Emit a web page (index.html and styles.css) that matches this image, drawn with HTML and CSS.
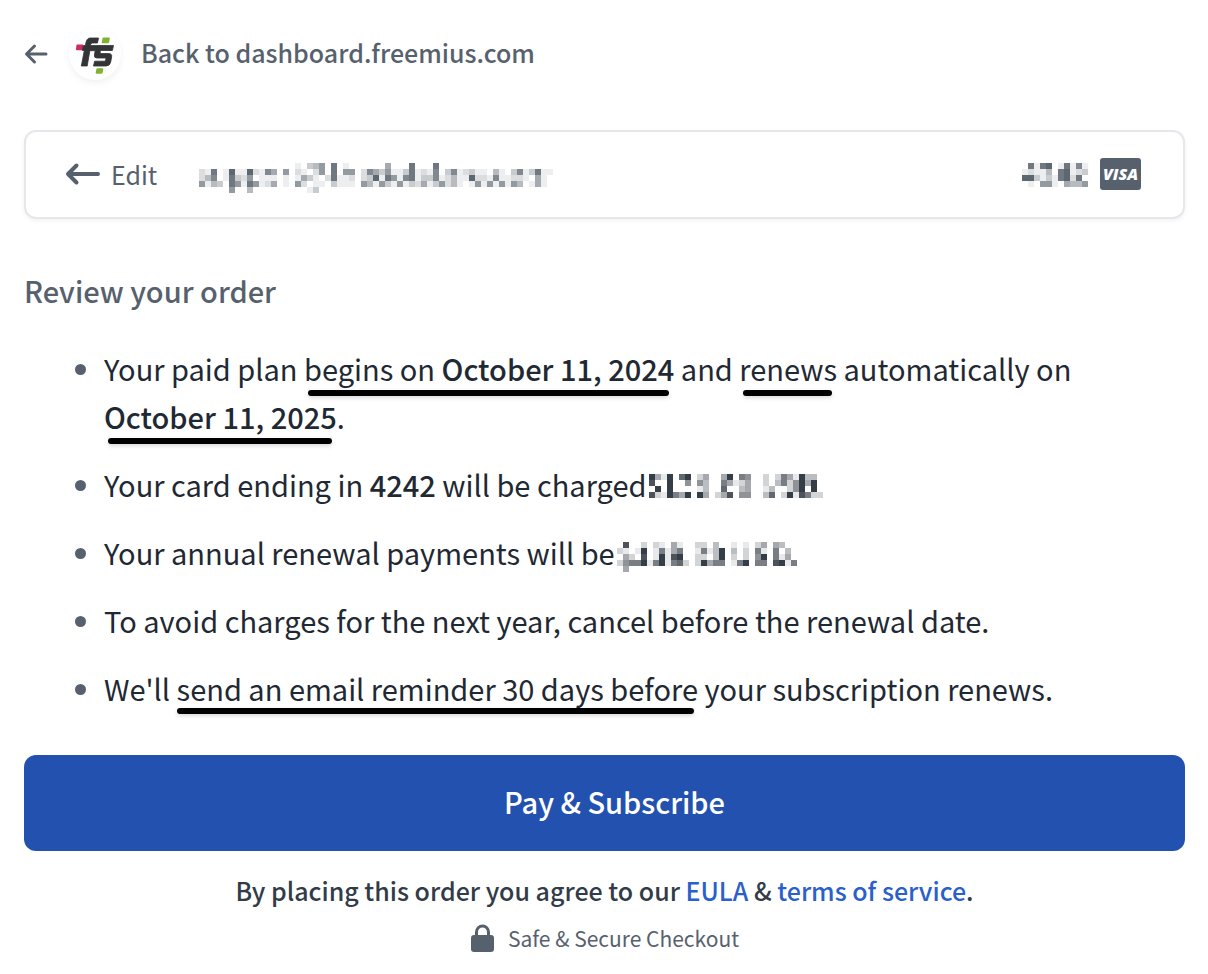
FILE: index.html
```
<!DOCTYPE html>
<html lang="en">
<head>
<meta charset="utf-8">
<meta name="viewport" content="width=device-width, initial-scale=1">
<title>Review your order</title>
<link rel="stylesheet" href="styles.css">
</head>
<body>
<main class="checkout">
  <a class="back" href="#dashboard">
    <svg class="back-arrow" viewBox="0 0 24 22" aria-hidden="true"><path d="M22 11H3M10.500 3 2.500 11l8 8"/></svg>
    <span class="logo">
      <svg viewBox="0 0 52 52" aria-hidden="true">
        <path fill="#cf2a62" d="M8.100 16.500h5.500q1 0 .8 1l-.7 3.700q-.3 1-1.300 1H7.800q-1 0-.8-1l.4-3.700q.2-1 .7-1z"/>
        <path fill="#7fb22f" d="M34.800 9.500h5.200q1 0 .8 1l-.7 3.800q-.3 1-1.300 1H33.500q-1 0-.8-1l.8-3.800q.2-1 1.300-1zM28.500 40.200h5q1 0 .8 1l-.7 3.500q-.3 1-1.300 1H27.500q-1 0-.8-1l.6-3.500q.2-1 1.200-1z"/>
        <path fill="#333436" stroke="#333436" stroke-width=".8" d="M21 10h8.500l-1 5h-5q-1.500 0-1.800 1.500l-.2 1h23l-1.100 5H32.500q-1 0-1.200 1l-.3 2h8.500q3.800 0 3.100 3.500l-.9 5Q40.900 38 37 38H24.500l1.100-4.800h9.700q1.200 0 1.400-1.200l.2-1q.2-1-1-1h-8q-3 0-2.500-3l.8-4.300h-5.300L18.200 38h-5.900l3-15.500h-2l1.100-5h2Q17.200 10 21 10z"/>
      </svg>
    </span>
    <span class="back-label">Back to dashboard.freemius.com</span>
  </a>

  <section class="card" aria-label="Payment details">
    <button class="edit" type="button">
      <svg class="edit-arrow" viewBox="0 0 36 24" aria-hidden="true"><path d="M33 12H3M11.500 3.500 3 12l8.500 8.500"/></svg>
      <span>Edit</span>
    </button>
    <svg class="mosaic email" data-tone="#4b5661" role="img" aria-label="Hidden email" data-rows="
00000000000000001034608010000005000800080000000000000000000
21801911921750602102608066027536113812170371231104103713811
24701832601110101531028112023918617813371241192217112210510
61430861861250106201103111064163161325136241016161616401510
00000600400000000013000000000000000000000000000000000000000"></svg>
    <svg class="mosaic last4" data-tone="#4b5661" role="img" aria-label="Hidden card digits" data-rows="
08189018171
12114089123
99313189280
01066105446"></svg>
    <span class="visa">VISA</span>
  </section>

  <h1 class="title">Review your order</h1>
  <ul class="terms">
    <li>Your paid plan <span class="mark">begins on <strong>October 11, 2024</strong></span> and <span class="mark">renews</span> automatically on <strong class="mark">October 11, 2025</strong>.</li>
    <li>Your card ending in <strong>4242</strong> will be charged <svg class="mosaic price" data-tone="#1f2832" role="img" aria-label="Hidden amount" data-rows="
94190790240049065002026419330
80090050530064124002036259490
09090000130070034001300259090
82196490940248055003702918622"></svg></li>
    <li>Your annual renewal payments will be <svg class="mosaic price" data-tone="#1f2832" role="img" aria-label="Hidden amount" data-rows="
080020210410022030010102404300
210190161460016139030206106030
042080191890022039020205906140
256691691672029466016906608916
040000000000000000000000000000"></svg></li>
    <li>To avoid charges for the next year, cancel before the renewal date.</li>
    <li>We'll <span class="mark wide">send an email reminder 30 days before</span> your subscription renews.</li>
  </ul>

  <button class="pay" type="button">Pay &amp; Subscribe</button>

  <p class="agree">By placing this order you agree to our <a href="#eula">EULA</a> &amp; <a href="#terms">terms of service</a>.</p>
  <p class="secure">
    <svg class="lock" viewBox="0 0 24 28" aria-hidden="true"><rect x="1" y="11" width="23" height="17" rx="3" fill="#57616e"/><path d="M6.500 12V8a6 6 0 0 1 12 0v4" fill="none" stroke="#57616e" stroke-width="3"/></svg>
    <span>Safe &amp; Secure Checkout</span>
  </p>
</main>
<script src="mosaic.js"></script>
</body>
</html>
```
FILE: mosaic.js
```
// Draws censored values as a grid of cells; each digit is a cell's darkness from 0 to 9.
document.querySelectorAll('.mosaic').forEach(function (svg) {
  var cell = 6;
  var rows = svg.dataset.rows.trim().split(/\s+/);
  var width = rows[0].length * cell;
  var height = rows.length * cell;
  svg.setAttribute('width', width);
  svg.setAttribute('height', height);
  svg.setAttribute('viewBox', '0 0 ' + width + ' ' + height);
  rows.forEach(function (row, y) {
    row.split('').forEach(function (level, x) {
      if (level === '0') return;
      var rect = document.createElementNS('http://www.w3.org/2000/svg', 'rect');
      rect.setAttribute('x', x * cell);
      rect.setAttribute('y', y * cell);
      rect.setAttribute('width', cell);
      rect.setAttribute('height', cell);
      rect.setAttribute('fill', svg.dataset.tone);
      rect.setAttribute('fill-opacity', level / 10);
      svg.appendChild(rect);
    });
  });
});
```
FILE: styles.css
```
* { box-sizing: border-box; }

body {
  margin: 0;
  background: #fff;
  color: #57616e;
  font-family: "Noto Sans CJK SC", "Noto Sans", sans-serif;
}

button { font: inherit; cursor: pointer; }

.checkout {
  display: flex;
  flex-direction: column;
  padding: 28px 23px 16px 24px;
}

.back {
  display: flex;
  align-items: center;
  align-self: flex-start;
  color: inherit;
  font-size: 25px;
  font-weight: 500;
  line-height: 48px;
  text-decoration: none;
}

.back-label { padding-bottom: 4px; }

.back-arrow {
  width: 24px;
  height: 22px;
  fill: none;
  stroke: #57616e;
  stroke-width: 3;
  stroke-linecap: round;
  stroke-linejoin: round;
}

.logo {
  width: 52px;
  height: 52px;
  margin: 0 20px 0 21px;
  border-radius: 50%;
  box-shadow: 0 3px 6px rgba(0, 0, 0, 0.06);
}

.logo svg { display: block; }

.card {
  display: flex;
  align-items: center;
  height: 89px;
  margin-top: 50px;
  padding: 0 42px 2px 39px;
  border: 2px solid #e5e7eb;
  border-radius: 12px;
  box-shadow: 0 2px 4px rgba(0, 0, 0, 0.05);
}

.edit {
  display: flex;
  align-items: center;
  gap: 10px;
  padding: 0;
  border: 0;
  background: none;
  color: inherit;
  font-size: 25px;
  line-height: 40px;
}

.edit-arrow {
  width: 36px;
  height: 24px;
  fill: none;
  stroke: #57616e;
  stroke-width: 4;
  stroke-linecap: round;
  stroke-linejoin: round;
}

.mosaic { shape-rendering: crispEdges; }

.email { margin: 8px 0 0 42px; }

.last4 { margin: 2px 0 0 auto; }

.visa {
  width: 41px;
  margin-left: 12px;
  border-radius: 3px;
  background: #57616e;
  color: #fff;
  font: italic 800 16px/32px "Open Sans", sans-serif;
  text-align: center;
}

.title {
  margin: 47px 0 0;
  font-size: 29px;
  font-weight: 500;
  line-height: 48px;
}

.terms {
  display: flex;
  flex-direction: column;
  gap: 20px;
  margin: 30px 0 43px;
  padding: 0 0 0 80px;
  color: #1f2933;
  font-size: 29px;
  line-height: 48px;
  list-style: none;
}

.terms li { position: relative; }

.terms li::before {
  content: "";
  position: absolute;
  top: 20px;
  left: -29px;
  width: 11px;
  height: 11px;
  border-radius: 50%;
  background: #57616e;
}

.terms strong { font-weight: 500; }

.price { vertical-align: top; margin: 14px 0 0 -4px; }

.mark {
  display: inline-block;
  position: relative;
}

.mark::after {
  content: "";
  position: absolute;
  right: 5px;
  bottom: -4px;
  left: 4px;
  height: 6px;
  border-radius: 3px;
  background: #000;
  box-shadow: 0 2px 4px rgba(0, 0, 0, 0.15);
}

.mark.wide::after {
  right: 4px;
  bottom: -2px;
  left: 0;
}

.pay {
  padding: 22px 0 26px 20px;
  border: 0;
  border-radius: 12px;
  background: #2351b0;
  color: #fff;
  font-size: 29px;
  font-weight: 500;
  line-height: 48px;
}

.agree {
  margin: 19px 0 0;
  color: #323c49;
  font-size: 25px;
  font-weight: 500;
  line-height: 40px;
  text-align: center;
}

.agree a { color: #2a60cc; text-decoration: none; }

.secure {
  display: flex;
  align-items: center;
  justify-content: center;
  gap: 14px;
  margin: 8px 0 0;
  font-size: 21px;
  line-height: 40px;
}

.lock {
  width: 24px;
  height: 28px;
}
```
